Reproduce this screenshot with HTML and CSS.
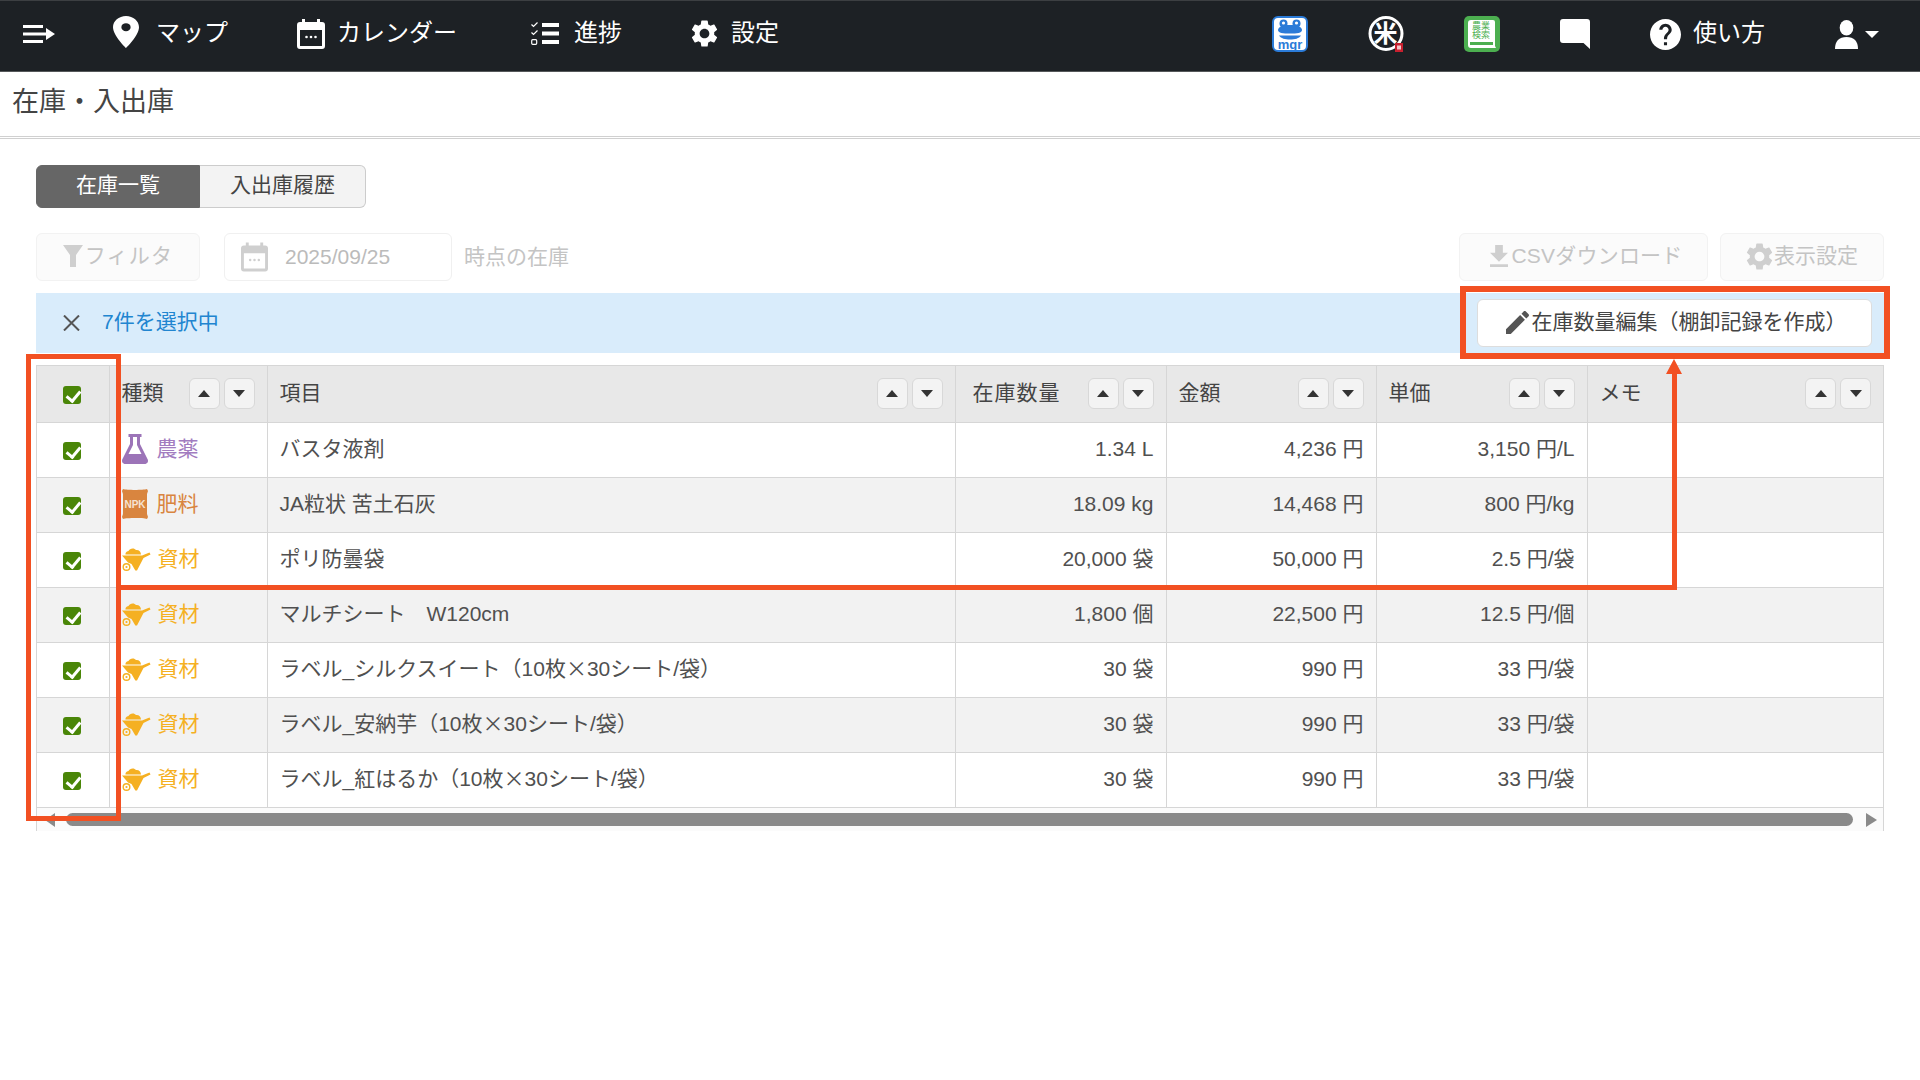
FILE: index.html
```html
<!DOCTYPE html>
<html lang="ja">
<head>
    <meta charset="UTF-8">
    <title>在庫・入出庫</title>
    <link rel="stylesheet" href="styles.css">
</head>
<body>
    <!-- icon sprites -->
    <svg class="sprites" xmlns="http://www.w3.org/2000/svg">
        <symbol id="i-calendar" viewBox="0 0 28 30">
            <path fill-rule="evenodd" d="M5 0h3v3h12V0h3v3h2a3 3 0 0 1 3 3v21a3 3 0 0 1-3 3H3a3 3 0 0 1-3-3V6a3 3 0 0 1 3-3h2zM3 11v16h22V11z"/>
            <circle cx="9.5" cy="18" r="1.3"/><circle cx="14" cy="18" r="1.3"/><circle cx="18.5" cy="18" r="1.3"/>
        </symbol>
        <symbol id="i-gear" viewBox="2.4 2 19.2 20">
            <path d="M19.14 12.94c.04-.3.06-.61.06-.94 0-.32-.02-.64-.07-.94l2.03-1.58c.18-.14.23-.41.12-.61l-1.92-3.32c-.12-.22-.37-.29-.59-.22l-2.39.96c-.5-.38-1.03-.7-1.62-.94l-.36-2.54c-.04-.24-.24-.41-.48-.41h-3.84c-.24 0-.43.17-.47.41l-.36 2.54c-.59.24-1.13.57-1.62.94l-2.39-.96c-.22-.08-.47 0-.59.22L2.74 8.87c-.12.21-.08.47.12.61l2.03 1.58c-.05.3-.09.63-.09.94s.02.64.07.94l-2.03 1.58c-.18.14-.23.41-.12.61l1.92 3.32c.12.22.37.29.59.22l2.39-.96c.5.38 1.03.7 1.62.94l.36 2.54c.05.24.24.41.48.41h3.84c.24 0 .44-.17.47-.41l.36-2.54c.59-.24 1.13-.56 1.62-.94l2.39.96c.22.08.47 0 .59-.22l1.92-3.32c.12-.22.07-.47-.12-.61l-2.01-1.58zM12 15.6c-1.98 0-3.6-1.62-3.6-3.6s1.62-3.6 3.6-3.6 3.6 1.62 3.6 3.6-1.62 3.6-3.6 3.6z"/>
        </symbol>
        <symbol id="i-barrow" viewBox="0 0 29 23">
            <path d="M3.500 6.500C3 4 5.500 3.500 6.500 3 7.500 0 12.500-.5 14 2c2.500-.5 5 1.500 5 4.500z"/>
            <path d="M0 7.500h20l7.500-3 1 2-7 3.500L15 22.500h-1.700L9.500 16 6 14.500z"/>
            <path fill-rule="evenodd" d="M4.500 15a4 4 0 1 1 0 8 4 4 0 0 1 0-8zm0 1.400a2.600 2.600 0 1 0 0 5.200 2.600 2.600 0 0 0 0-5.200zm0 1.500a1.100 1.100 0 1 1 0 2.200 1.100 1.100 0 0 1 0-2.200z"/>
        </symbol>
    </svg>

    <nav class="navbar">
        <div class="nav-left">
            <svg class="nav-toggle" viewBox="0 0 32 20"><path d="M0 1h20v3H0zM0 8.500h23V4l9 6-9 6v-4.500H0zM0 16h20v3H0z"/></svg>
            <a class="nav-item nav-item-map">
                <svg class="ic-pin" viewBox="5 2 14 20" preserveAspectRatio="none"><path d="M12 2C8.130 2 5 5.130 5 9c0 5.250 7 13 7 13s7-7.750 7-13c0-3.870-3.130-7-7-7zm0 9.500a2.500 2.500 0 0 1 0-5 2.500 2.500 0 0 1 0 5z"/></svg>
                <span class="nav-label">マップ</span>
            </a>
            <a class="nav-item nav-item-cal">
                <svg class="ic-cal"><use href="#i-calendar"/></svg>
                <span class="nav-label">カレンダー</span>
            </a>
            <a class="nav-item nav-item-list">
                <svg class="ic-list" viewBox="0 0 28 23"><path d="M11 1h17v4H11zM11 9.500h17v4H11zM11 18h17v4H11z"/><path d="M.5 2.500l2 2L6.500.5" class="ic-check"/><path d="M.5 10.500l2 2 4-4" class="ic-check"/><rect x=".7" y="17.700" width="5" height="4.600" rx="1" class="ic-check"/></svg>
                <span class="nav-label">進捗</span>
            </a>
            <a class="nav-item nav-item-gear">
                <svg class="ic-gear"><use href="#i-gear"/></svg>
                <span class="nav-label">設定</span>
            </a>
        </div>
        <div class="nav-right">
            <svg class="ic-app" viewBox="0 0 36 36">
                <rect x="1" y="1" width="34" height="34" rx="5" fill="#fff" stroke="#2b7bd8" stroke-width="2"/>
                <circle cx="11.500" cy="7.500" r="4" fill="#2b7bd8"/><circle cx="24.500" cy="7.500" r="4" fill="#2b7bd8"/>
                <circle cx="11.500" cy="7" r="1.600" fill="#fff"/><circle cx="24.500" cy="7" r="1.600" fill="#fff"/>
                <path d="M6 14c0-3 5-5 12-5s12 2 12 5-5 3.500-12 3.500S6 17 6 14z" fill="#2b7bd8"/>
                <path d="M7 19.500h22c-2 3-6 4-11 4s-9-1-11-4z" fill="#2b7bd8"/>
                <text x="18" y="33" class="ic-mgr">mgr</text>
            </svg>
            <svg class="ic-app" viewBox="0 0 36 36">
                <circle cx="18" cy="17.500" r="16" fill="none" stroke="#fff" stroke-width="3"/>
                <text x="17.500" y="26" class="ic-rice">米</text>
                <rect x="27" y="27" width="8" height="9" fill="#c8202f"/>
                <rect x="29" y="29.500" width="4" height="4" fill="#f3c6ca"/>
            </svg>
            <svg class="ic-app" viewBox="0 0 36 36">
                <rect width="36" height="36" rx="5" fill="#4caf50"/>
                <path d="M7 4h22a2 2 0 0 1 2 2v24l1 2H7a3 3 0 0 1-3-3V7a3 3 0 0 1 3-3z" fill="#fff"/>
                <rect x="6" y="26" width="23" height="3" fill="#4caf50"/>
                <text x="17" y="13" class="ic-book">農業</text>
                <text x="17" y="22" class="ic-book">検索</text>
            </svg>
            <svg class="ic-chat" viewBox="0 0 30 30"><path d="M3 0h24a3 3 0 0 1 3 3v27l-6.500-6H3a3 3 0 0 1-3-3V3a3 3 0 0 1 3-3z"/></svg>
            <a class="nav-item nav-item-help">
                <svg class="ic-help" viewBox="2 2 20 20"><path d="M12 2C6.480 2 2 6.480 2 12s4.480 10 10 10 10-4.480 10-10S17.520 2 12 2zm1 17h-2v-2h2v2zm2.070-7.750l-.9.920C13.450 12.900 13 13.500 13 15h-2v-.5c0-1.100.450-2.100 1.170-2.830l1.240-1.260c.370-.360.590-.860.590-1.410 0-1.100-.9-2-2-2s-2 .9-2 2H8c0-2.210 1.790-4 4-4s4 1.790 4 4c0 .880-.360 1.680-.930 2.250z"/></svg>
                <span class="nav-label">使い方</span>
            </a>
            <div class="nav-user">
                <svg class="ic-user" viewBox="0 0 23 29"><ellipse cx="11.500" cy="7.800" rx="6.800" ry="7.800"/><path d="M0 29c0-8 4-12 11.500-12S23 21 23 29z"/></svg>
                <span class="caret"></span>
            </div>
        </div>
    </nav>

    <header class="page-title">在庫・入出庫</header>

    <main class="content">
        <div class="tabs">
            <div class="tab tab-active">在庫一覧</div>
            <div class="tab">入出庫履歴</div>
        </div>

        <div class="toolbar">
            <div class="tool-btn btn-filter">
                <svg class="ic-filter" viewBox="0 0 20 22"><path d="M0 0h20l-7 10v12H7V10z"/></svg>
                フィルタ
            </div>
            <div class="date-input">
                <svg class="ic-cal-grey"><use href="#i-calendar"/></svg>
                <span>2025/09/25</span>
            </div>
            <span class="date-note">時点の在庫</span>
            <div class="tool-btn btn-csv">
                <svg class="ic-download" viewBox="5 3 14 17"><path d="M19 9h-4V3H9v6H5l7 7 7-7zM5 18v2h14v-2H5z"/></svg>
                CSVダウンロード
            </div>
            <div class="tool-btn btn-view">
                <svg class="ic-gear-small"><use href="#i-gear"/></svg>
                表示設定
            </div>
        </div>

        <div class="select-bar">
            <svg class="ic-close" viewBox="0 0 17 16"><path d="M1 .5l15 15M16 .5l-15 15"/></svg>
            <span class="select-count">7件を選択中</span>
            <div class="edit-btn">
                <svg class="ic-pencil" viewBox="3 3 18 18"><path d="M3 17.250V21h3.750L17.810 9.940l-3.750-3.750L3 17.250zM20.710 7.040c.390-.390.390-1.020 0-1.410l-2.340-2.340c-.390-.390-1.020-.390-1.410 0l-1.830 1.830 3.750 3.750 1.830-1.830z"/></svg>
                在庫数量編集（棚卸記録を作成）
            </div>
        </div>

        <div class="table-wrap">
            <table class="stock-table">
                <colgroup>
                    <col class="col-check"><col class="col-type"><col class="col-item"><col class="col-qty"><col class="col-amount"><col class="col-price"><col>
                </colgroup>
                <thead>
                    <tr>
                        <th class="cell-check"><span class="check"></span></th>
                        <th><div class="th-inner">種類<span class="sort"><i class="sort-up"></i><i class="sort-down"></i></span></div></th>
                        <th><div class="th-inner">項目<span class="sort"><i class="sort-up"></i><i class="sort-down"></i></span></div></th>
                        <th class="th-qty"><div class="th-inner">在庫数量<span class="sort"><i class="sort-up"></i><i class="sort-down"></i></span></div></th>
                        <th><div class="th-inner">金額<span class="sort"><i class="sort-up"></i><i class="sort-down"></i></span></div></th>
                        <th><div class="th-inner">単価<span class="sort"><i class="sort-up"></i><i class="sort-down"></i></span></div></th>
                        <th><div class="th-inner">メモ<span class="sort"><i class="sort-up"></i><i class="sort-down"></i></span></div></th>
                    </tr>
                </thead>
                <tbody>
                    <tr>
                        <td class="cell-check"><span class="check"></span></td>
                        <td><div class="type type-chem">
                            <svg class="ic-type" viewBox="0 0 26 30"><path fill-rule="evenodd" d="M6.500 0h13v3H18v7l7.500 15c1.500 3-.5 5-3.500 5H4c-3 0-5-2-3.500-5L8 10V3H6.500zM11 3v8l-4.500 9h13L15 11V3z"/></svg>
                            農薬</div></td>
                        <td>バスタ液剤</td>
                        <td class="num">1.34 L</td><td class="num">4,236 円</td><td class="num">3,150 円/L</td><td></td>
                    </tr>
                    <tr>
                        <td class="cell-check"><span class="check"></span></td>
                        <td><div class="type type-fert">
                            <svg class="ic-type" viewBox="0 0 26 30"><path d="M1 0c4 1.200 20 1.200 24 0l1 2-1 3v20l1 3-1 2c-4-1.200-20-1.200-24 0l-1-2 1-3V5L0 2z"/><text x="13" y="18.500" class="ic-npk">NPK</text></svg>
                            肥料</div></td>
                        <td>JA粒状 苦土石灰</td>
                        <td class="num">18.09 kg</td><td class="num">14,468 円</td><td class="num">800 円/kg</td><td></td>
                    </tr>
                    <tr>
                        <td class="cell-check"><span class="check"></span></td>
                        <td><div class="type type-mat"><svg class="ic-barrow"><use href="#i-barrow"/></svg>資材</div></td>
                        <td>ポリ防曇袋</td>
                        <td class="num">20,000 袋</td><td class="num">50,000 円</td><td class="num">2.5 円/袋</td><td></td>
                    </tr>
                    <tr>
                        <td class="cell-check"><span class="check"></span></td>
                        <td><div class="type type-mat"><svg class="ic-barrow"><use href="#i-barrow"/></svg>資材</div></td>
                        <td>マルチシート　W120cm</td>
                        <td class="num">1,800 個</td><td class="num">22,500 円</td><td class="num">12.5 円/個</td><td></td>
                    </tr>
                    <tr>
                        <td class="cell-check"><span class="check"></span></td>
                        <td><div class="type type-mat"><svg class="ic-barrow"><use href="#i-barrow"/></svg>資材</div></td>
                        <td>ラベル_シルクスイート（10枚<span class="cjk">×</span>30シート/袋）</td>
                        <td class="num">30 袋</td><td class="num">990 円</td><td class="num">33 円/袋</td><td></td>
                    </tr>
                    <tr>
                        <td class="cell-check"><span class="check"></span></td>
                        <td><div class="type type-mat"><svg class="ic-barrow"><use href="#i-barrow"/></svg>資材</div></td>
                        <td>ラベル_安納芋（10枚<span class="cjk">×</span>30シート/袋）</td>
                        <td class="num">30 袋</td><td class="num">990 円</td><td class="num">33 円/袋</td><td></td>
                    </tr>
                    <tr>
                        <td class="cell-check"><span class="check"></span></td>
                        <td><div class="type type-mat"><svg class="ic-barrow"><use href="#i-barrow"/></svg>資材</div></td>
                        <td>ラベル_紅はるか（10枚<span class="cjk">×</span>30シート/袋）</td>
                        <td class="num">30 袋</td><td class="num">990 円</td><td class="num">33 円/袋</td><td></td>
                    </tr>
                </tbody>
            </table>
            <div class="scrollbar">
                <span class="arrow-left"></span>
                <span class="thumb"></span>
                <span class="arrow-right"></span>
            </div>
        </div>
    </main>

    <!-- red call-outs drawn over the page -->
    <div class="mark mark-column"></div>
    <div class="mark mark-button"></div>
    <div class="mark-line-h"></div>
    <div class="mark-line-v"></div>
    <div class="mark-head"></div>
</body>
</html>
```

FILE: styles.css
```css
:root {
    --nav: #1d2125;
    --line: #d6d6d6;
    --text: #505050;
    --mark: #f25022;
}

* {
    box-sizing: border-box;
}

body {
    margin: 0;
    background: #fff;
    color: var(--text);
    font-family: "Liberation Sans", "Noto Sans CJK JP", sans-serif;
    font-size: 21px;
    line-height: 1.2;
}

.cjk {
    font-family: "Noto Sans CJK JP", sans-serif;
    line-height: 1;
}

.sprites {
    display: none;
}

/* navbar */
.navbar {
    display: flex;
    justify-content: space-between;
    align-items: center;
    height: 72px;
    padding: 0 41px 4px 23px;
    background: var(--nav);
    border-top: 1px solid #3c3f42;
    border-bottom: 1px solid #55585a;
    color: #fff;
    font-size: 24px;
    fill: #fff;
}

.nav-left,
.nav-right,
.nav-item,
.nav-user {
    display: flex;
    align-items: center;
}

.nav-label {
    padding-bottom: 2px;
}

.nav-left .nav-item {
    gap: 13px;
    margin-left: 70px;
}

.nav-left .nav-item-map {
    margin-left: 58px;
    gap: 17px;
}

.nav-left .nav-item-cal {
    margin-left: 69px;
    gap: 12px;
}

.nav-left .nav-item-list {
    margin-left: 74px;
    gap: 15px;
}

.nav-left .nav-item-gear {
    margin-left: 69px;
}

.nav-toggle {
    width: 32px;
    height: 20px;
}

.ic-pin {
    width: 26px;
    height: 32px;
    margin-bottom: 4px;
}

.ic-cal {
    width: 28px;
    height: 30px;
}

.ic-list {
    width: 28px;
    height: 23px;
}

.ic-check {
    fill: none;
    stroke: #fff;
    stroke-width: 1.2;
}

.ic-gear {
    width: 27px;
    height: 27px;
}

.nav-right {
    gap: 60px;
}

.ic-app {
    width: 36px;
    height: 36px;
}

.ic-mgr {
    font-size: 13px;
    font-weight: 700;
    fill: #2b7bd8;
    text-anchor: middle;
}

.ic-rice {
    font-size: 24px;
    font-weight: 700;
    fill: #fff;
    text-anchor: middle;
}

.ic-book {
    font-size: 9px;
    fill: #4caf50;
    text-anchor: middle;
}

.ic-chat {
    width: 30px;
    height: 30px;
}

.nav-item-help {
    gap: 12px;
}

.ic-help {
    width: 31px;
    height: 31px;
}

.nav-user {
    gap: 7px;
    margin-left: 10px;
}

.ic-user {
    width: 23px;
    height: 29px;
}

.caret {
    border-top: 7px solid #fff;
    border-left: 7px solid transparent;
    border-right: 7px solid transparent;
}

/* title */
.page-title {
    height: 67px;
    padding: 10px 0 0 12px;
    border-bottom: 3px double #d0d0d0;
    color: #444;
    font-size: 27px;
    line-height: 40px;
}

.content {
    padding: 26px 36px 0;
}

/* tabs */
.tabs {
    display: flex;
    width: 330px;
    height: 43px;
}

.tab {
    flex: 1;
    display: flex;
    align-items: center;
    justify-content: center;
    padding-bottom: 3px;
    background: #f3f3f3;
    border: 1px solid #ccc;
    border-left: 0;
    border-radius: 0 6px 6px 0;
    color: #444;
}

.tab-active {
    flex: none;
    width: 164px;
    background: #666;
    border: 1px solid #666;
    border-radius: 6px 0 0 6px;
    color: #fff;
}

/* toolbar */
.toolbar {
    display: flex;
    align-items: center;
    height: 48px;
    margin-top: 25px;
    color: #c4c4c4;
    fill: #cfcfcf;
}

.tool-btn {
    display: flex;
    align-items: center;
    justify-content: center;
    height: 48px;
    padding-bottom: 2px;
    background: #fbfbfb;
    border: 1px solid #f2f2f2;
    border-radius: 6px;
}

.btn-filter {
    width: 164px;
    gap: 2px;
    letter-spacing: 1.2px;
}

.ic-filter {
    width: 20px;
    height: 22px;
}

.date-input {
    display: flex;
    align-items: center;
    width: 228px;
    height: 48px;
    margin-left: 24px;
    padding-left: 16px;
    gap: 17px;
    border: 1px solid #f0f0f0;
    border-radius: 6px;
    color: #bbb;
}

.ic-cal-grey {
    width: 27px;
    height: 30px;
    flex: none;
}

.date-note {
    margin-left: 12px;
    margin-right: auto;
}

.btn-csv {
    width: 249px;
    gap: 4px;
    padding-left: 5px;
    letter-spacing: .2px;
}

.ic-download {
    width: 18px;
    height: 22px;
}

.btn-view {
    width: 164px;
    margin-left: 12px;
    gap: 1px;
}

.ic-gear-small {
    width: 27px;
    height: 27px;
}

/* selection bar */
.select-bar {
    display: flex;
    align-items: center;
    height: 60px;
    margin-top: 12px;
    padding: 0 12px 0 27px;
    background: #d9ecfb;
}

.ic-close {
    width: 17px;
    height: 16px;
    fill: none;
    stroke: #555;
    stroke-width: 2;
}

.select-count {
    margin-left: 22px;
    margin-right: auto;
    padding-bottom: 2px;
    color: #2185d0;
}

.edit-btn {
    display: flex;
    align-items: center;
    justify-content: center;
    gap: 3px;
    width: 395px;
    height: 48px;
    padding: 0 0 2px 3px;
    background: #fff;
    border: 1px solid #ddd;
    border-radius: 6px;
    color: #444;
    fill: #555;
    white-space: nowrap;
}

.ic-pencil {
    width: 23px;
    height: 23px;
}

/* table */
.table-wrap {
    margin-top: 12px;
    border-right: 1px solid var(--line);
    border-left: 1px solid var(--line);
}

.stock-table {
    width: 100%;
    table-layout: fixed;
    border-collapse: collapse;
}

.col-check { width: 72px; }
.col-type { width: 158px; }
.col-item { width: 688px; }
.col-qty { width: 211px; }
.col-amount { width: 210px; }
.col-price { width: 211px; }

.stock-table th,
.stock-table td {
    height: 55px;
    padding: 0 12px 2px;
    border: 1px solid var(--line);
    font-weight: 400;
    text-align: left;
    white-space: nowrap;
}

.stock-table th {
    height: 57px;
    background: #e8e8e8;
    color: #444;
}

.stock-table .th-qty {
    padding-left: 17px;
    letter-spacing: 1px;
}

.stock-table tr > :first-child {
    border-left: 0;
}

.stock-table tr > :last-child {
    border-right: 0;
}

.stock-table tbody tr:nth-child(even) {
    background: #f2f2f2;
}

.stock-table .cell-check {
    padding: 0 2px 0 0;
    text-align: center;
}

.stock-table .num {
    text-align: right;
}

.check {
    position: relative;
    display: inline-block;
    width: 18px;
    height: 18px;
    margin-bottom: 1px;
    background: #4a8608;
    border-radius: 3px;
    vertical-align: middle;
}

.check::after {
    content: "";
    position: absolute;
    left: 6px;
    top: 2px;
    width: 6px;
    height: 11px;
    border: solid #fff;
    border-width: 0 3px 3px 0;
    transform: rotate(40deg);
}

.th-inner {
    display: flex;
    align-items: center;
    justify-content: space-between;
}

.sort {
    display: flex;
    gap: 4px;
    margin-left: auto;
    letter-spacing: 0;
}

.sort i {
    display: flex;
    align-items: center;
    justify-content: center;
    width: 31px;
    height: 31px;
    background: #f3f3f3;
    border: 1px solid #d8d8d8;
    border-radius: 6px;
}

.sort i::before {
    content: "";
    border-left: 6px solid transparent;
    border-right: 6px solid transparent;
}

.sort-up::before {
    border-bottom: 7px solid #333;
}

.sort-down::before {
    border-top: 7px solid #333;
}

.type {
    display: flex;
    align-items: center;
    gap: 8px;
}

.type-chem {
    gap: 9px;
    color: #a27cc0;
    fill: #9c74b8;
}

.type-fert {
    gap: 9px;
    color: #d9853f;
    fill: #d9853f;
}

.type-mat {
    gap: 7px;
    color: #f5b022;
    fill: #f5b022;
}

.ic-type {
    width: 26px;
    height: 30px;
}

.ic-npk {
    font-size: 10px;
    font-weight: 700;
    fill: #f6e3d2;
    text-anchor: middle;
}

.ic-barrow {
    width: 29px;
    height: 23px;
}

/* scrollbar */
.scrollbar {
    display: flex;
    align-items: center;
    height: 23px;
    padding: 0 6px 0 8px;
    background: #fbfbfb;
}

.thumb {
    flex: 1;
    height: 13px;
    margin: 0 13px 0 11px;
    background: #8a8a8a;
    border-radius: 7px;
}

.arrow-left {
    border-top: 7px solid transparent;
    border-bottom: 7px solid transparent;
    border-right: 10px solid #8a8a8a;
}

.arrow-right {
    border-top: 7px solid transparent;
    border-bottom: 7px solid transparent;
    border-left: 11px solid #8a8a8a;
}

/* call-outs */
.mark {
    position: absolute;
    border: 5px solid var(--mark);
}

.mark-column {
    left: 26px;
    top: 354px;
    width: 95px;
    height: 467px;
}

.mark-button {
    left: 1460px;
    top: 286px;
    width: 430px;
    height: 73px;
    border-width: 6px;
}

.mark-line-h {
    position: absolute;
    left: 121px;
    top: 585px;
    width: 1556px;
    height: 5px;
    background: var(--mark);
}

.mark-line-v {
    position: absolute;
    left: 1672px;
    top: 372px;
    width: 5px;
    height: 218px;
    background: var(--mark);
}

.mark-head {
    position: absolute;
    left: 1666px;
    top: 359px;
    border-left: 8.5px solid transparent;
    border-right: 8.5px solid transparent;
    border-bottom: 15px solid var(--mark);
}
```
